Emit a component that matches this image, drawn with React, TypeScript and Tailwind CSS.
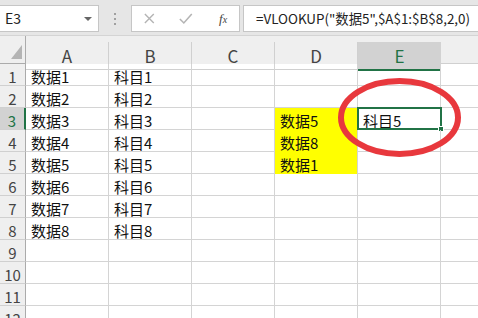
import React from 'react';

const COLS = ['A', 'B', 'C', 'D', 'E'];
const ROWS = 12;

const DATA: Record<string, string> = {
  A1: '数据1', A2: '数据2', A3: '数据3', A4: '数据4', A5: '数据5', A6: '数据6', A7: '数据7', A8: '数据8',
  B1: '科目1', B2: '科目2', B3: '科目3', B4: '科目4', B5: '科目5', B6: '科目6', B7: '科目7', B8: '科目8',
  D3: '数据5', D4: '数据8', D5: '数据1',
  E3: '科目5',
};

const YELLOW = ['D3', 'D4', 'D5'];
const FONT = { fontFamily: '"Noto Sans CJK SC", "Liberation Sans", sans-serif' };

const Toolbar = () => (
  <div className="h-[36px] bg-[#e6e6e6] border-b border-[#d4d4d4] flex items-start pt-[5px]">
    <div className="w-[99px] h-[27px] bg-white border border-l-0 border-[#c6c6c6] flex items-center justify-between pl-[5px] pr-[6px]">
      <span className="text-[14px] text-[#222]">E3</span>
      <span className="w-0 h-0 border-l-[4px] border-r-[4px] border-t-[4px] border-l-transparent border-r-transparent border-t-[#666]" />
    </div>
    <div className="w-[32px] h-[27px] flex flex-col items-center justify-center gap-[3px]">
      <span className="w-[2px] h-[2px] bg-[#a0a0a0]" />
      <span className="w-[2px] h-[2px] bg-[#a0a0a0]" />
      <span className="w-[2px] h-[2px] bg-[#a0a0a0]" />
    </div>
    <div className="w-[109px] h-[27px] bg-white border border-[#c6c6c6] flex items-center">
      <svg width="36" height="27" viewBox="0 0 36 27">
        <path d="M13 9l9 9M22 9l-9 9" stroke="#b4b4b4" strokeWidth="1.4" fill="none" />
      </svg>
      <svg width="36" height="27" viewBox="0 0 36 27">
        <path d="M12 14l4 4 8-9" stroke="#b4b4b4" strokeWidth="1.6" fill="none" />
      </svg>
      <span className="w-[36px] pl-[4px] text-center text-[13px] italic text-[#444]" style={{ fontFamily: '"Liberation Serif", serif' }}>
        f<span className="text-[10px]">x</span>
      </span>
    </div>
    <div className="flex-1 ml-[3px] h-[27px] bg-white border border-r-0 border-[#c6c6c6] flex items-center pl-[12px]">
      <span className="text-[13.4px] text-[#222] whitespace-nowrap">=VLOOKUP("数据5",$A$1:$B$8,2,0)</span>
    </div>
  </div>
);

const HeaderRow = () => (
  <div className="flex h-[28px] bg-[#efefef]">
    <div className="w-[26px] shrink-0 border-r border-b border-[#ababab] relative">
      <svg className="absolute right-[3px] bottom-[4px]" width="11" height="14" viewBox="0 0 11 14">
        <path d="M11 0L11 14L0 14Z" fill="#b4b4b4" />
      </svg>
    </div>
    {COLS.map((c) => {
      const sel = c === 'E';
      return (
        <div key={c} className="w-[83px] shrink-0 flex flex-col">
          <div
            className={`mt-[6px] flex-1 flex items-center justify-center pt-[1px] text-[17px] ${
              sel ? 'bg-[#d2d2d2] text-[#217346] border-b-2 border-[#217346]' : 'text-[#444] border-r border-b border-[#d0d0d0]'
            }`}
          >
            {c}
          </div>
        </div>
      );
    })}
    <div className="flex-1 border-b border-[#d0d0d0]" />
  </div>
);

export default function App() {
  return (
    <div className="w-[478px] h-[318px] overflow-hidden bg-white relative" style={FONT}>
      <Toolbar />
      <HeaderRow />
      {Array.from({ length: ROWS }, (_, i) => {
        const r = i + 1;
        const rowSel = r === 3;
        return (
          <div key={r} className="flex h-[22px]">
            <div
              className={`w-[26px] shrink-0 border-b border-[#d0d0d0] flex items-center justify-center pt-[3px] text-[15px] leading-none ${
                rowSel ? 'bg-[#d2d2d2] text-[#217346] border-r-2 border-r-[#217346]' : 'bg-[#efefef] text-[#444] border-r border-r-[#ababab]'
              }`}
            >
              {r}
            </div>
            {COLS.map((c) => {
              const id = `${c}${r}`;
              const yellow = YELLOW.includes(id);
              return (
                <div
                  key={id}
                  className={`w-[83px] shrink-0 relative flex items-center pl-[5px] pt-[3px] text-[15px] leading-none text-[#111] whitespace-nowrap ${
                    yellow ? 'bg-[#ffff00] border-r border-r-[#d4d4d4]' : 'border-r border-b border-[#d4d4d4]'
                  }`}
                >
                  {DATA[id]}
                  {id === 'E3' && (
                    <span className="absolute -left-[1px] -top-[1px] w-[85px] h-[23px] border-2 border-[#217346]">
                      <span className="absolute -right-[4px] -bottom-[4px] w-[6px] h-[6px] bg-[#217346] border border-white" />
                    </span>
                  )}
                </div>
              );
            })}
            <div className="flex-1 border-b border-[#d4d4d4]" />
          </div>
        );
      })}
      <svg className="absolute left-0 top-0 pointer-events-none" width="478" height="318" viewBox="0 0 478 318">
        <ellipse cx="399.5" cy="117.5" rx="58.5" ry="36.5" fill="none" stroke="#e8383d" strokeWidth="6" />
      </svg>
    </div>
  );
}
